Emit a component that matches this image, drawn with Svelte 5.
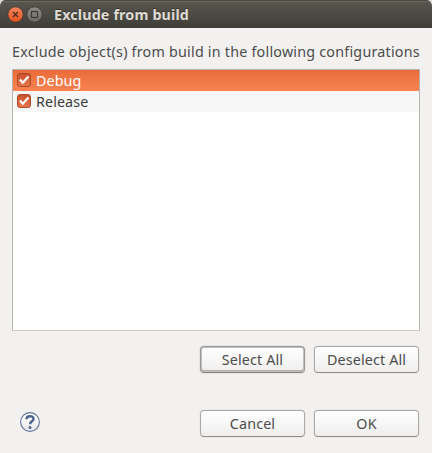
<script>
  let items = $state([
    { name: 'Debug', checked: true },
    { name: 'Release', checked: true }
  ]);
  let selected = $state(0);
</script>

<div class="window">
  <header>
    <svg class="controls" width="44" height="28" viewBox="0 0 44 28" aria-hidden="true">
      <defs>
        <linearGradient id="close" x1="0" y1="0" x2="0" y2="1">
          <stop offset="0" stop-color="#f58660" />
          <stop offset="1" stop-color="#e6501f" />
        </linearGradient>
        <linearGradient id="max" x1="0" y1="0" x2="0" y2="1">
          <stop offset="0" stop-color="#8f8d85" />
          <stop offset="1" stop-color="#6c6a63" />
        </linearGradient>
      </defs>
      <circle cx="15.5" cy="14.5" r="7.7" fill="url(#close)" stroke="#3a3731" stroke-width="0.8" />
      <path d="M13 12l5 5M18 12l-5 5" stroke="#4b2a1b" stroke-width="1.3" fill="none" />
      <circle cx="34.5" cy="14.5" r="7.7" fill="url(#max)" stroke="#3a3731" stroke-width="0.8" />
      <rect x="31.5" y="11.5" width="6" height="6" fill="none" stroke="#3b3a35" stroke-width="1.2" />
    </svg>
    <h1>Exclude from build</h1>
  </header>

  <main>
    <p>Exclude object(s) from build in the following configurations</p>
    <div class="list">
      {#each items as item, i}
        <div class="row" class:selected={i === selected}>
          <svg width="16" height="16" viewBox="0 0 16 16" aria-hidden="true">
            <defs>
              <linearGradient id="box{i}" x1="0" y1="0" x2="0" y2="1">
                <stop offset="0" stop-color="#c9522a" />
                <stop offset="1" stop-color="#e8764e" />
              </linearGradient>
            </defs>
            <rect x="1.5" y="1.5" width="13" height="13" rx="2.6" fill="url(#box{i})" stroke="#a84a28" />
            {#if item.checked}
              <path d="M3.9 7.4l2.9 3.3L12.5 4.6" fill="none" stroke="#fff" stroke-width="2.2" />
            {/if}
          </svg>
          <span>{item.name}</span>
        </div>
      {/each}
    </div>
    <div class="actions">
      <button class="focused">Select All</button>
      <button>Deselect All</button>
    </div>
    <footer>
      <svg class="help" width="22" height="22" viewBox="0 0 22 22" aria-hidden="true">
        <defs>
          <linearGradient id="help" x1="0" y1="0" x2="0" y2="1">
            <stop offset="0" stop-color="#fff" />
            <stop offset="1" stop-color="#e9e9ea" />
          </linearGradient>
        </defs>
        <circle cx="11" cy="11" r="9.4" fill="url(#help)" stroke="#5d7499" stroke-width="1.1" />
        <path d="M7.5 8.2C7.5 4.3 14.5 4.2 14.5 7.9C14.5 10.4 11.1 10.2 11 13.3" fill="none" stroke="#4c648e" stroke-width="2.4" />
        <circle cx="11" cy="16.4" r="1.5" fill="#4c648e" />
      </svg>
      <div class="actions">
        <button>Cancel</button>
        <button>OK</button>
      </div>
    </footer>
  </main>
</div>

<style>
  :global(body) { margin: 0; background: #d9dbdc; }
  .window {
    box-sizing: border-box;
    width: 432px;
    height: 453px;
    overflow: hidden;
    border-radius: 6px 6px 0 0;
    background: #f2f1f0;
    color: #4c4c4c;
    font: 14.3px "Noto Sans", "Open Sans", sans-serif;
  }
  header {
    box-sizing: border-box;
    height: 28px;
    display: flex;
    background: linear-gradient(#5a584f, #3e3d38);
    box-shadow: inset 0 1px #4b4942, inset 0 2px #69675e;
  }
  .controls { flex: none; }
  h1 {
    margin: 1px 0 0 10px;
    font-size: 14.3px;
    line-height: 28px;
    font-weight: 700;
    letter-spacing: 0.15px;
    color: #dfdbd2;
    white-space: nowrap;
    text-shadow: 0 -1px #35342f;
  }
  main { padding: 0 12px; }
  p {
    margin: 0;
    padding-top: 12px;
    height: 29px;
    line-height: 24px;
    letter-spacing: 0.225px;
    white-space: nowrap;
  }
  .list {
    box-sizing: border-box;
    width: 408px;
    height: 262px;
    border: 1px solid #b6b3ae;
    border-bottom-color: #cfccc8;
    background: #fff;
    color: #3c3c3c;
  }
  .row {
    height: 21px;
    display: flex;
    align-items: flex-start;
    gap: 4px;
    padding-left: 3px;
    background: #f7f7f7;
  }
  .row svg { margin-top: 2px; }
  .row span { line-height: 21px; letter-spacing: 0.1px; }
  .row.selected { color: #fff; background: linear-gradient(#e96c39, #f98353); }
  .actions { display: flex; justify-content: flex-end; gap: 9px; padding: 15px 1px 0 0; }
  button {
    box-sizing: border-box;
    width: 105px;
    height: 27px;
    padding: 0;
    border: 1px solid #aaa8a6;
    border-bottom-color: #8f8d8b;
    border-radius: 4px;
    background: linear-gradient(#fff, #efeeed);
    box-shadow: 0 0 0 1px #eae9e8;
    color: #4c4c4c;
    font: inherit;
    line-height: 25px;
    letter-spacing: 0.15px;
    white-space: nowrap;
  }
  .focused {
    border-color: #9b9997;
    border-bottom-color: #868482;
    box-shadow: inset 0 0 0 1px #c1bfbd, inset 0 -1px 0 1px #b3b1af, 0 0 0 1px #e6e5e4;
  }
  footer { display: flex; justify-content: space-between; padding-top: 22px; }
  .help { margin: 16px 0 0 7px; }
</style>
